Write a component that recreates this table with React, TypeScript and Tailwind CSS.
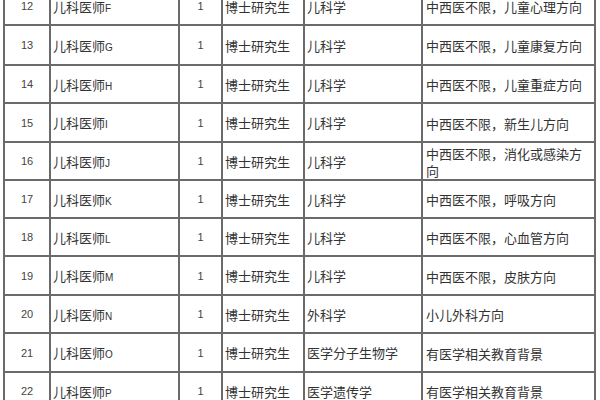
const rows = [
  { no: "12", name: "F", major: "儿科学", note: ["中西医不限，儿童心理方向"], h: "h-[38px]" },
  { no: "13", name: "G", major: "儿科学", note: ["中西医不限，儿童康复方向"], h: "h-[40px]" },
  { no: "14", name: "H", major: "儿科学", note: ["中西医不限，儿童重症方向"], h: "h-[38px]" },
  { no: "15", name: "I", major: "儿科学", note: ["中西医不限，新生儿方向"], h: "h-[39px]" },
  { no: "16", name: "J", major: "儿科学", note: ["中西医不限，消化或感染方", "向"], h: "h-[38px]" },
  { no: "17", name: "K", major: "儿科学", note: ["中西医不限，呼吸方向"], h: "h-[38px]" },
  { no: "18", name: "L", major: "儿科学", note: ["中西医不限，心血管方向"], h: "h-[38px]" },
  { no: "19", name: "M", major: "儿科学", note: ["中西医不限，皮肤方向"], h: "h-[39px]" },
  { no: "20", name: "N", major: "外科学", note: ["小儿外科方向"], h: "h-[38px]" },
  { no: "21", name: "O", major: "医学分子生物学", note: ["有医学相关教育背景"], h: "h-[39px]" },
  { no: "22", name: "P", major: "医学遗传学", note: ["有医学相关教育背景"], h: "h-[38px]" },
];

const cell = "flex h-full items-center border-l-2 border-[#6a6a6a] pt-[1px]";

export default function App() {
  return (
    <div
      className="h-[400px] w-[600px] overflow-hidden bg-white text-[13px] text-[#333]"
      style={{ fontFamily: '"Noto Sans CJK SC", "Liberation Sans", sans-serif' }}
    >
      <div className="-mt-[12px] ml-[3px] w-[593px]">
        {rows.map((r) => (
          <div key={r.no} className={`flex border-b-2 border-[#6a6a6a] ${r.h}`}>
            <div className={`${cell} w-[46px] justify-center font-['Liberation_Sans'] text-[11px] text-[#444]`}>
              {r.no}
            </div>
            <div className={`${cell} w-[129px] pl-[2px]`}>
              <span>
                儿科医师<span className="font-['Liberation_Sans'] text-[10px]">{r.name}</span>
              </span>
            </div>
            <div className={`${cell} w-[43px] justify-center font-['Liberation_Sans'] text-[11px] text-[#444]`}>
              1
            </div>
            <div className={`${cell} w-[82px] pl-[2px]`}>博士研究生</div>
            <div className={`${cell} w-[118px] pl-[2px]`}>{r.major}</div>
            <div className={`${cell} w-[175px] border-r-2 pl-[3px]`}>
              <div className="flex flex-col leading-[17px]">
                {r.note.map((t) => (
                  <span key={t}>{t}</span>
                ))}
              </div>
            </div>
          </div>
        ))}
      </div>
    </div>
  );
}
